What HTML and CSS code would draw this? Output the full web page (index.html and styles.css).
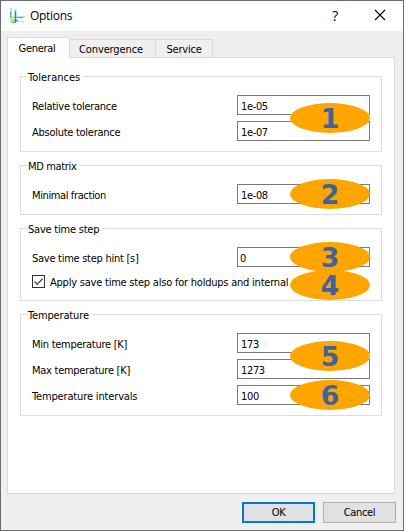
FILE: index.html
```html
<!DOCTYPE html>
<html lang="en">
<head>
<meta charset="utf-8">
<title>Options</title>
<link rel="stylesheet" href="styles.css">
</head>
<body>
<main class="dialog">
  <header class="titlebar">
    <svg class="logo" width="17" height="17" viewBox="0 0 17 17">
      <path fill="#b5e6ee" d="M1 0h2v15h-2zM5 1h3v14h-3zM1 8h15v2h-15zM1 13h14v1h-14z"/>
      <path fill="#e3e53c" d="M2 8h2v6h-2zM3 11h4v3h-4z"/>
      <path fill="#43b5b8" d="M1 4h1v6h-1zM5 9h9v1h-9zM3 14h4v1h-4z"/>
      <path fill="#2f7fc0" d="M6 3h1v11h-1zM5 12h4v1h-4z"/>
    </svg>
    <h1 class="title">Options</h1>
    <span class="help">?</span>
    <svg class="close" width="12" height="12" viewBox="0 0 12 12"><path d="M1 1l10 10M11 1L1 11" stroke="#000" stroke-width="1.1" fill="none"/></svg>
  </header>
  <nav class="tabs">
    <span class="tab active">General</span>
    <span class="tab convergence">Convergence</span>
    <span class="tab service">Service</span>
  </nav>
  <section class="panel">
    <section class="group tolerances">
      <h2 class="legend wide">Tolerances</h2>
      <div class="row"><span class="label">Relative tolerance</span><span class="field">1e-05</span></div>
      <div class="row"><span class="label">Absolute tolerance</span><span class="field">1e-07</span></div>
      <b class="badge between">1</b>
    </section>
    <section class="group matrix">
      <h2 class="legend">MD matrix</h2>
      <div class="row"><span class="label tight">Minimal fraction</span><span class="field">1e-08</span></div>
      <b class="badge first">2</b>
    </section>
    <section class="group timestep">
      <h2 class="legend save">Save time step</h2>
      <div class="row"><span class="label">Save time step hint [s]</span><span class="field flush">0</span></div>
      <div class="check">
        <svg width="13" height="13" viewBox="0 0 13 13"><rect x=".5" y=".5" width="12" height="12" fill="#fff" stroke="#333"/><path d="M2.5 6.5l2.7 2.8 5.4-5.6" fill="none" stroke="#333" stroke-width="1.2"/></svg>
        <span class="check-label">Apply save time step also for holdups and internal</span>
      </div>
      <b class="badge first">3</b>
      <b class="badge second">4</b>
    </section>
    <section class="group temperature">
      <h2 class="legend medium">Temperature</h2>
      <div class="row"><span class="label">Min temperature [K]</span><span class="field">173</span></div>
      <div class="row"><span class="label">Max temperature [K]</span><span class="field">1273</span></div>
      <div class="row"><span class="label medium">Temperature intervals</span><span class="field">100</span></div>
      <b class="badge between">5</b>
      <b class="badge third">6</b>
    </section>
  </section>
  <footer class="actions">
    <button class="button primary">OK</button>
    <button class="button">Cancel</button>
  </footer>
</main>
</body>
</html>
```
FILE: styles.css
```css
* { box-sizing: border-box; }
body { margin: 0; }
.dialog {
  width: 404px; height: 531px;
  border: 1px solid #6b6b6b;
  background: #efefef;
  color: #000;
  font: 11px/14px "DejaVu Sans Condensed", "DejaVu Sans", sans-serif;
  font-stretch: condensed;
  letter-spacing: -0.35px;
  white-space: nowrap;
  display: flex; flex-direction: column;
}
.titlebar {
  height: 30px; background: #fff;
  display: flex; align-items: center;
  padding: 0 17px 0 8px;
}
.title { margin: 0 0 0 4px; font: 12px/16px "Open Sans", sans-serif; letter-spacing: -0.3px; flex: 1; }
.close { position: relative; top: -1px; }
.help { font: 14px/16px "Open Sans", sans-serif; margin-right: 36px; }
.tabs { height: 26px; padding: 6px 0 0 6px; display: flex; align-items: flex-end; }
.tab {
  height: 18px; border: 1px solid #d9d9d9; border-bottom: 0;
  text-align: center; line-height: 20px;
}
.active { width: 63px; height: 21px; margin-bottom: -1px; padding-right: 3px; background: #fff; position: relative; letter-spacing: -0.3px; line-height: 21px; }
.convergence { width: 86px; border-left: 0; letter-spacing: -0.12px; padding-right: 3px; }
.service { width: 57px; border-left: 0; letter-spacing: -0.2px; }
.panel {
  margin-left: 6px; width: 388px; height: 437px;
  border: 1px solid #d9d9d9; background: #fff;
  padding: 18px 12px;
  display: flex; flex-direction: column;
}
.group {
  position: relative; width: 362px; border: 1px solid #dcdcdc;
  padding: 18px 11px 0 10px;
  display: flex; flex-direction: column; gap: 6px;
}
.tolerances { height: 76px; margin-bottom: 13px; }
.matrix { height: 50px; margin-bottom: 13px; }
.timestep { height: 73px; margin-bottom: 13px; }
.temperature { height: 102px; }
.legend {
  position: absolute; left: 7px; top: -7px; margin: 0;
  padding-right: 3px; background: #fff; font: inherit; line-height: 16px;
}
.row { display: flex; justify-content: space-between; height: 20px; line-height: 23px; padding-left: 1px; }
.label { letter-spacing: -0.27px; }
.wide { letter-spacing: 0; }
.save { letter-spacing: -0.22px; }
.medium { letter-spacing: -0.15px; }
.tight { letter-spacing: -0.38px; }
.field { width: 133px; height: 20px; border: 1px solid #7a7a7a; padding-left: 3px; line-height: 21px; }
.flush { padding-left: 2px; }
.check { display: flex; align-items: center; gap: 5px; height: 13px; margin-top: 2px; padding-left: 1px; }
.check-label { padding-top: 2px; letter-spacing: -0.22px; }
.badge {
  position: absolute; right: 11px; width: 80px; height: 30px;
  border-radius: 50%; background: #ffa500; color: #41639c;
  font: bold 26.7px/31px "DejaVu Sans", sans-serif; text-align: center; letter-spacing: 0;
}
.between { top: 26px; }
.first { top: 13px; }
.second { top: 41px; }
.third { top: 65px; }
.actions { display: flex; justify-content: flex-end; gap: 8px; padding: 8px 7px 0 0; }
.button {
  width: 73px; height: 21px; padding: 1px 0 0;
  border: 1px solid #adadad; background: #e1e1e1; color: #000;
  font: inherit; letter-spacing: inherit;
}
.primary { border: 2px solid #0078d7; }
```
